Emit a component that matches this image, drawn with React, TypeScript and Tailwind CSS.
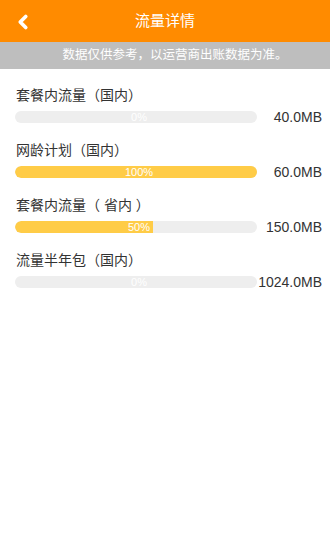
import { ChevronLeft } from "lucide-react";

type Usage = {
  name: string;
  percent: number;
  fill: number; // px of the 242px bar
  total: string;
};

const usages: Usage[] = [
  { name: "套餐内流量（国内）", percent: 0, fill: 0, total: "40.0MB" },
  { name: "网龄计划（国内）", percent: 100, fill: 242, total: "60.0MB" },
  { name: "套餐内流量（ 省内 ）", percent: 50, fill: 138, total: "150.0MB" },
  { name: "流量半年包（国内）", percent: 0, fill: 0, total: "1024.0MB" },
];

const font = { fontFamily: '"Liberation Sans", "Noto Sans CJK SC", sans-serif' };

export default function App() {
  return (
    <div className="min-h-[550px] w-[330px] bg-white" style={font}>
      <header className="relative flex h-[42px] items-center justify-center bg-[#FF8B00]">
        <ChevronLeft className="absolute left-[12px] top-[11px] h-[22px] w-[22px] text-white" strokeWidth={4} />
        <h1 className="text-[15px] text-white">流量详情</h1>
      </header>

      <div className="flex h-[27px] items-center justify-center bg-[#BEBEBE] pl-[20px] text-[12.5px] text-white">
        数据仅供参考，以运营商出账数据为准。
      </div>

      <ul className="pt-[16px]">
        {usages.map((item) => (
          <li key={item.name} className="mb-[17px]">
            <p className="pl-[16px] text-[14px] leading-[20px] text-[#333333]">{item.name}</p>
            <div className="mt-[6px] flex h-[12px] items-center">
              <div className="relative ml-[15px] h-[12px] w-[242px] overflow-hidden rounded-full bg-[#EEEEEE]">
                <div className="h-full rounded-l-full bg-[#FFCC47]" style={{ width: item.fill }} />
                <span className="absolute inset-0 flex items-center justify-center pl-[6px] text-[11px] leading-none text-white">
                  {item.percent}%
                </span>
              </div>
              <span className="flex-1 pr-[8px] text-right text-[14px] leading-none text-[#333333]">{item.total}</span>
            </div>
          </li>
        ))}
      </ul>
    </div>
  );
}
